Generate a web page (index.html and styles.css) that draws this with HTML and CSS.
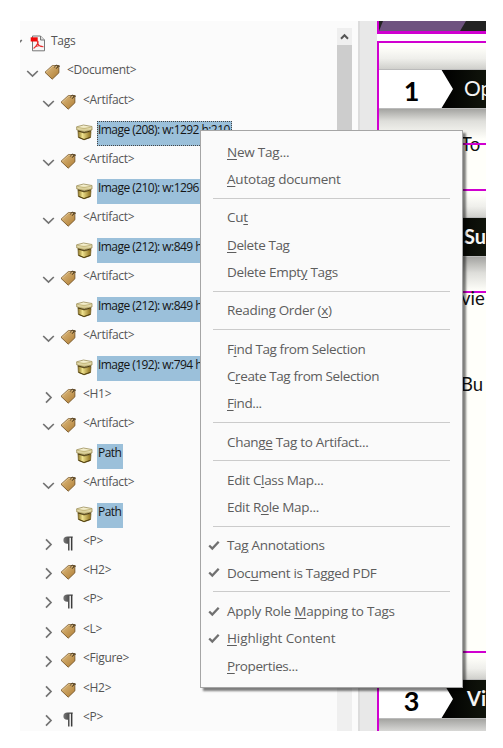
FILE: index.html
```html
<!DOCTYPE html>
<html lang="en">
<head>
<meta charset="utf-8">
<title>Tags</title>
<link rel="stylesheet" href="styles.css">
</head>
<body>
<svg class="defs" width="0" height="0" aria-hidden="true">
  <defs>
    <linearGradient id="gold" x1="0" y1="0" x2="1" y2="1"><stop offset="0" stop-color="#dfbd83"/><stop offset="1" stop-color="#ae7c32"/></linearGradient>
    <linearGradient id="lid" x1="0" y1="0" x2="0" y2="1"><stop offset="0" stop-color="#fffce4"/><stop offset="1" stop-color="#c9bb79"/></linearGradient>
    <linearGradient id="carton" x1="0" y1="0" x2="1" y2="0"><stop offset="0" stop-color="#8c7526"/><stop offset=".35" stop-color="#efe28e"/><stop offset="1" stop-color="#8a6c19"/></linearGradient>
    <linearGradient id="ink" x1="0" y1="0" x2="1" y2="0"><stop offset="0" stop-color="#777"/><stop offset="1" stop-color="#333"/></linearGradient>
    <symbol id="tag" viewBox="0 0 17 17"><path d="M1 8.3 8.2 1.7 14.8 1.5 14.9 8.8 8.2 15.2Z" fill="url(#gold)" stroke="#765628" stroke-width=".9"/><path d="M2 8.3 8.5 2.4 14 2.3" fill="none" stroke="#ebd19f" stroke-width=".7"/><path d="M10.3 3.5c1-2.6 3.1-2.9 3.5-1.4.2 1.1-1 1.8-1.8 2.8M13 3.7c.5-1.6 2.1-2.4 3-1.1" fill="none" stroke="#4b3b22" stroke-width="1"/></symbol>
    <symbol id="box" viewBox="0 0 17 17"><path d="M2 7 8 9 15 7.5 14.5 13.5 8 15.8 2.4 13.4Z" fill="url(#carton)" stroke="#6b571c" stroke-width=".7"/><path d="M.6 2.8 7.5 1 16 2.5 16 6 8.2 7.8.8 6Z" fill="url(#lid)" stroke="#8c7d42" stroke-width=".7"/><path d="M1 3.2 8 4.7 15.7 3" fill="none" stroke="#b7a968" stroke-width=".7"/><path d="M1.8 6.9 8.1 8.5 15.2 6.9M2.6 13.3 8 15.5 14.4 13.3" fill="none" stroke="#51400e" stroke-width="1"/></symbol>
    <symbol id="para" viewBox="0 0 17 17"><path d="M12.7 1.6H7.5C4.8 1.6 3.4 3 3.4 5.2s1.3 3.6 3.8 3.6h.8v6.8h1.5V2.8h1.4v12.8h1.5V2.8h.3Z" fill="url(#ink)"/></symbol>
    <symbol id="down" viewBox="0 0 13 13"><path d="M1.2 4 6.5 9.1 11.8 4" fill="none" stroke="#737373" stroke-width="1.7"/></symbol>
    <symbol id="right" viewBox="0 0 13 13"><path d="M4 1.3 9 6.5 4 11.7" fill="none" stroke="#737373" stroke-width="1.7"/></symbol>
    <symbol id="check" viewBox="0 0 12 11"><path d="M1.2 5.5 4.3 8.6 10.7 1.8" fill="none" stroke="#707070" stroke-width="2.3"/></symbol>
    <symbol id="pdf" viewBox="0 0 16 17"><path d="M2.5 1H10.5L14.5 5V15.8H2.5Z" fill="#f6f6f6" stroke="#777"/><path d="M10.5 1V5h4" fill="#ddd" stroke="#777"/><path d="M.7 2.3h7v4.2h-7Z" fill="#f00808"/><path d="M7.2 6c2.2 0 .2 4.3-3.6 7.5M7.3 6.2c.2 3.7 2.7 5.5 6.2 5.5M4 13c2-2.3 5.4-2.8 8.5-1.4" fill="none" stroke="#e62b2b" stroke-width="1.1"/></symbol>
  </defs>
</svg>
<main class="window">
  <section class="tree">
    <ul class="rows">
      <li class="row root"><svg class="chev clip" viewBox="9 0 4 13"><path d="M1.2 4 6.5 9.1 11.8 4" fill="none" stroke="#737373" stroke-width="1.7"/></svg><svg class="icon"><use href="#pdf"/></svg><span class="label">Tags</span></li>
      <li class="row l1"><svg class="chev"><use href="#down"/></svg><svg class="icon"><use href="#tag"/></svg><span class="label">&lt;Document&gt;</span></li>
      <li class="row l2"><svg class="chev"><use href="#down"/></svg><svg class="icon"><use href="#tag"/></svg><span class="label">&lt;Artifact&gt;</span></li>
      <li class="row l3"><svg class="icon"><use href="#box"/></svg><span class="label sel focus">Image (208): w:1292 h:210</span></li>
      <li class="row l2"><svg class="chev"><use href="#down"/></svg><svg class="icon"><use href="#tag"/></svg><span class="label">&lt;Artifact&gt;</span></li>
      <li class="row l3"><svg class="icon"><use href="#box"/></svg><span class="label sel long">Image (210): w:1296</span></li>
      <li class="row l2"><svg class="chev"><use href="#down"/></svg><svg class="icon"><use href="#tag"/></svg><span class="label">&lt;Artifact&gt;</span></li>
      <li class="row l3"><svg class="icon"><use href="#box"/></svg><span class="label sel long">Image (212): w:849 h</span></li>
      <li class="row l2"><svg class="chev"><use href="#down"/></svg><svg class="icon"><use href="#tag"/></svg><span class="label">&lt;Artifact&gt;</span></li>
      <li class="row l3"><svg class="icon"><use href="#box"/></svg><span class="label sel long">Image (212): w:849 h</span></li>
      <li class="row l2"><svg class="chev"><use href="#down"/></svg><svg class="icon"><use href="#tag"/></svg><span class="label">&lt;Artifact&gt;</span></li>
      <li class="row l3"><svg class="icon"><use href="#box"/></svg><span class="label sel long">Image (192): w:794 h</span></li>
      <li class="row l2"><svg class="chev"><use href="#right"/></svg><svg class="icon"><use href="#tag"/></svg><span class="label">&lt;H1&gt;</span></li>
      <li class="row l2"><svg class="chev"><use href="#down"/></svg><svg class="icon"><use href="#tag"/></svg><span class="label">&lt;Artifact&gt;</span></li>
      <li class="row l3"><svg class="icon"><use href="#box"/></svg><span class="label sel">Path</span></li>
      <li class="row l2"><svg class="chev"><use href="#down"/></svg><svg class="icon"><use href="#tag"/></svg><span class="label">&lt;Artifact&gt;</span></li>
      <li class="row l3"><svg class="icon"><use href="#box"/></svg><span class="label sel">Path</span></li>
      <li class="row l2"><svg class="chev"><use href="#right"/></svg><svg class="icon"><use href="#para"/></svg><span class="label">&lt;P&gt;</span></li>
      <li class="row l2"><svg class="chev"><use href="#right"/></svg><svg class="icon"><use href="#tag"/></svg><span class="label">&lt;H2&gt;</span></li>
      <li class="row l2"><svg class="chev"><use href="#right"/></svg><svg class="icon"><use href="#para"/></svg><span class="label">&lt;P&gt;</span></li>
      <li class="row l2"><svg class="chev"><use href="#right"/></svg><svg class="icon"><use href="#tag"/></svg><span class="label">&lt;L&gt;</span></li>
      <li class="row l2"><svg class="chev"><use href="#right"/></svg><svg class="icon"><use href="#tag"/></svg><span class="label">&lt;Figure&gt;</span></li>
      <li class="row l2"><svg class="chev"><use href="#right"/></svg><svg class="icon"><use href="#tag"/></svg><span class="label">&lt;H2&gt;</span></li>
      <li class="row l2"><svg class="chev"><use href="#right"/></svg><svg class="icon"><use href="#para"/></svg><span class="label">&lt;P&gt;</span></li>
    </ul>
    <div class="scroll"><div class="up"><svg viewBox="0 0 15 17"><path d="M4 10.7 7.5 7.2 11 10.7" fill="none" stroke="#555" stroke-width="2"/></svg></div><div class="thumb"></div></div>
  </section>
  <div class="gutter"></div>
  <section class="page">
    <div class="cover"><svg viewBox="0 0 109 10"><path d="M0 0h109v10H0Z" fill="#222"/><path d="M4 0h83l-6 10H0Z" fill="#6e537f"/></svg></div>
    <div class="sheet">
      <div class="fade-in"></div>
      <div class="banner"><svg viewBox="0 0 107 40"><path d="M0 0H62L74 20 62 40H0Z" fill="#fff"/></svg><b class="num">1</b><span class="title light">Op</span></div>
      <div class="body b1"><span class="copy struck">To</span></div>
      <div class="fade-in"></div>
      <div class="banner"><b class="num"></b><span class="title">Su</span></div>
      <div class="body b2"></div>
      <div class="body b3"><span class="copy vie">vie</span><span class="copy bu">Bu</span></div>
      <div class="fade-in"></div>
      <div class="banner"><svg viewBox="0 0 107 40"><path d="M0 0H62L74 20 62 40H0Z" fill="#fff"/></svg><b class="num">3</b><span class="title vi">Vi</span></div>
      <div class="body b4"></div>
    </div>
  </section>
  <nav class="menu">
    <div class="item snug"><span><u>N</u>ew Tag...</span></div>
    <div class="item snug"><span><u>A</u>utotag document</span></div>
    <hr>
    <div class="item snug"><span>Cu<u>t</u></span></div>
    <div class="item tight"><span><u>D</u>elete Tag</span></div>
    <div class="item"><span>Delete Empt<u>y</u> Tags</span></div>
    <hr>
    <div class="item"><span>Reading Order (<u>x</u>)</span></div>
    <hr>
    <div class="item tight"><span>F<u>i</u>nd Tag from Selection</span></div>
    <div class="item tight"><span>C<u>r</u>eate Tag from Selection</span></div>
    <div class="item tight"><span><u>F</u>ind...</span></div>
    <hr>
    <div class="item"><span>Chang<u>e</u> Tag to Artifact...</span></div>
    <hr>
    <div class="item"><span>Edit C<u>l</u>ass Map...</span></div>
    <div class="item"><span>Edit R<u>o</u>le Map...</span></div>
    <hr>
    <div class="item"><svg><use href="#check"/></svg><span>Ta<u>g</u> Annotations</span></div>
    <div class="item"><svg><use href="#check"/></svg><span>Doc<u>u</u>ment is Tagged PDF</span></div>
    <hr>
    <div class="item snug"><svg><use href="#check"/></svg><span>Apply Role <u>M</u>apping to Tags</span></div>
    <div class="item wide"><svg><use href="#check"/></svg><span><u>H</u>ighlight Content</span></div>
    <div class="item tight"><span><u>P</u>roperties...</span></div>
  </nav>
</main>
</body>
</html>
```
FILE: styles.css
```css
* { box-sizing: border-box; }
body { margin: 0; padding: 21px 17px 17px 20px; height: 748px; background: #fff; overflow: hidden; font-family: "Open Sans", "Noto Sans", sans-serif; }
.defs { position: absolute; }
.window { position: relative; display: flex; width: 466px; height: 710px; background: #fbfbfb; }

.tree { display: flex; width: 338px; height: 710px; overflow: hidden; }
.rows { flex: 1; min-width: 0; list-style: none; margin: 0; padding: 7px 0 0; }
.row { display: flex; align-items: flex-start; height: 29.4px; white-space: nowrap; }
.chev { flex: none; width: 13px; height: 13px; margin-top: 10px; }
.icon { flex: none; width: 17px; height: 17px; margin: 7px 0 0 5px; }
.label { height: 25px; margin-left: 5px; padding: 0 1px; font-size: 12px; line-height: 25px; letter-spacing: -.3px; color: #555; }
.label.sel { height: 25px; margin: 4.5px 0 0 4px; padding: 0 2px 0 1px; line-height: 17px; letter-spacing: -.55px; color: #151515; background: #9bc0da; }
.label.long { min-width: 120px; }
.label.focus { outline: 1px dotted #454545; outline-offset: -1px; }
.root .clip { width: 4px; margin-left: -1px; margin-top: 8px; }
.root .icon { width: 16px; margin: 7px 0 0 7px; }
.root .label { margin-left: 4px; }
.l1 { padding-left: 6px; }
.l2 { padding-left: 22px; }
.l3 { padding-left: 51px; }
.l3 .icon { margin-top: 8px; }
.l3 .label.sel { margin-left: 4px; }

.scroll { flex: none; width: 15px; height: 703px; margin: 7px 6px 0 0; background: #efefef; }
.up { height: 17px; }
.up svg { display: block; width: 15px; height: 17px; }
.thumb { height: 500px; background: #cdcdcd; }
.gutter { flex: none; width: 19px; border-left: 2px solid #dcdcdc; background: #e8e8e8; }

.page { flex: none; width: 109px; overflow: hidden; background: #fff; }
.cover { height: 13px; margin-bottom: 7px; border-left: 2px solid #d000d0; border-bottom: 3px solid #d000d0; }
.cover svg { display: block; width: 109px; height: 10px; }
.sheet { height: 690px; border-left: 2px solid #d000d0; border-top: 2px solid #d000d0; background: #fffffa; }
.fade-in { height: 26px; background: linear-gradient(#fffffa 15%, #efefeb 60%, #d0d0cc); }
.banner { display: flex; position: relative; height: 40px; background: linear-gradient(90deg, #000 60%, #10140b); border: solid #bbb; border-width: 1px 0; overflow: hidden; font-family: Lato, sans-serif; }
.banner svg { position: absolute; left: 0; top: -1px; width: 107px; height: 40px; }
.num { flex: none; position: relative; width: 65px; text-align: center; font-size: 27px; line-height: 41px; color: #000; }
.title { position: relative; margin-left: 20px; font-size: 20px; font-weight: 700; line-height: 36px; color: #f4f4f4; white-space: nowrap; }
.title.light { font-size: 21px; font-weight: 400; }
.title.vi { margin-left: 23px; }
.body { display: flow-root; white-space: nowrap; font-family: Lato, sans-serif; }
.copy { display: block; position: relative; font-size: 18.5px; line-height: 20px; color: #111; }
.b1 { height: 82px; padding: 25px 0 0 82px; border-bottom: 2px solid #d000d0; background: linear-gradient(#a4a4a1, #dededa 12px, #fffffa 30px); }
.struck::after { content: ""; position: absolute; left: 0; right: 0; top: 9px; height: 2px; background: #d000d0; }
.b2 { height: 36px; border-bottom: 2px solid #d000d0; background: linear-gradient(#a4a4a1, #dededa 16px, #fffffa 34px); }
.b3 { height: 360px; padding: 0 0 0 82px; border-bottom: 2px solid #d000d0; }
.vie { margin-top: -5px; }
.bu { margin-top: 66px; }
.b4 { height: 12px; background: linear-gradient(#a4a4a1, #d8d8d6); }

.menu { position: absolute; left: 180px; top: 109px; width: 263px; height: 558px; padding-top: 7px; background: #fafafa; border: 1px solid #a5a5a5; box-shadow: 3px 3px 2px rgba(0,0,0,.5); }
.item { display: flex; align-items: center; height: 27.4px; padding-left: 26px; font-size: 13.5px; letter-spacing: -.32px; color: #5d5d5d; white-space: nowrap; }
.item.snug { letter-spacing: -.22px; }
.item.tight { letter-spacing: -.4px; }
.item.wide { letter-spacing: -.1px; }
.item svg { width: 12px; height: 11px; margin-left: -19px; margin-right: 7px; }
.item u { text-underline-offset: 2px; text-decoration-thickness: 1px; }
.menu hr { height: 1px; margin: 4.93px 12px; border: 0; background: #cbcbcb; }
```
